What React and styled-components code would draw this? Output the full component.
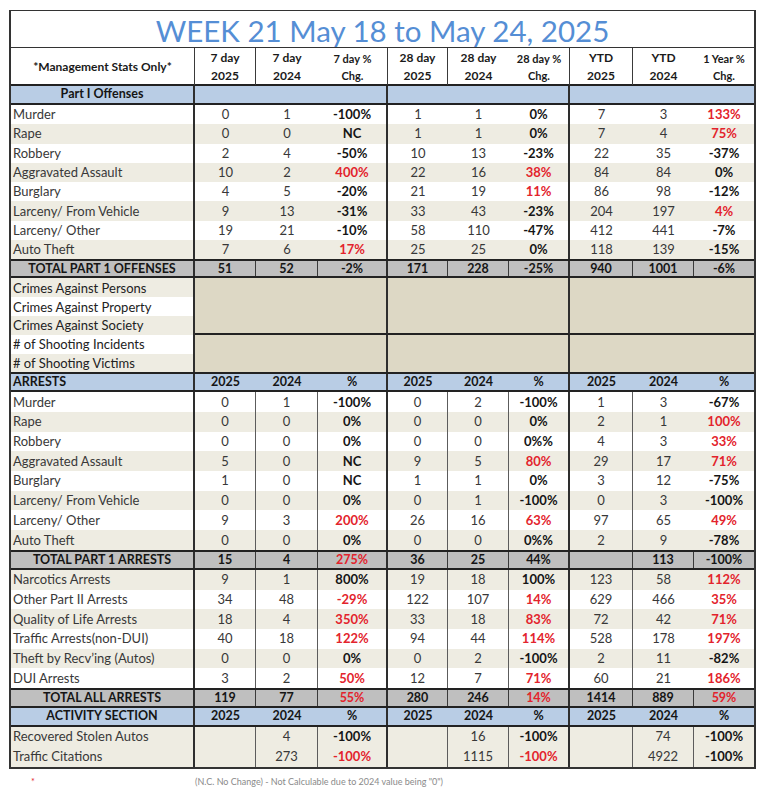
import React from "react";
import styled, { createGlobalStyle } from "styled-components";

const GlobalStyle = createGlobalStyle`
  body {
    margin: 0;
    background: #fff;
    font-family: Lato, "Open Sans", "Liberation Sans", sans-serif;
  }
`;

const COLS = "184px 61px 62px 70px 60px 61px 61px 63px 61px 60px";

const LINES = {
  g: "2px solid #2e2e2e",
  d: "1px solid #3a3a3a",
  t: "1px solid #5c5c5c",
  "": "none",
};

const BG = {
  white: "#ffffff",
  beige: "#eeece2",
  blue: "#b9cde5",
  gray: "#bfbfbf",
  tan: "#ddd8c5",
};

const Page = styled.div`
  padding: 10px 0 0 9px;
  height: 788px;
  box-sizing: border-box;
  overflow: hidden;
`;

const Sheet = styled.div`
  width: 747px;
  box-sizing: border-box;
  border: 1px solid #333;
  border-left-width: 2px;
  border-right-width: 2px;
  border-bottom-width: 2px;
`;

const TitleBar = styled.div`
  height: 37px;
  display: flex;
  align-items: center;
  justify-content: center;
  border-bottom: 1px solid #333;
  font-size: 29.5px;
  color: #558ed5;
  padding-top: 2px;
  box-sizing: border-box;
`;

const Row = styled.div`
  display: grid;
  grid-template-columns: ${COLS};
  height: ${(p) => p.$h}px;
  box-sizing: border-box;
  background: ${(p) => BG[p.$bg] || "transparent"};
  border-top: ${(p) => (p.$top ? "2px solid #222" : "none")};
  border-bottom: ${(p) => (p.$bottom ? "2px solid #222" : "none")};
  font-size: ${(p) => p.$size || 13}px;
`;

const Cell = styled.div`
  display: flex;
  align-items: center;
  justify-content: ${(p) => (p.$left ? "flex-start" : "center")};
  padding: ${(p) => (p.$left ? "0 0 0 2px" : "0 2px")};
  box-sizing: border-box;
  border-right: ${(p) => LINES[p.$line || ""]};
  font-weight: ${(p) => (p.$bold ? 700 : 400)};
  font-size: ${(p) => (p.$fs ? `${p.$fs}px` : "inherit")};
  color: ${(p) => (p.$red ? "#e3232c" : p.$bold ? "#151515" : "#383838")};
  white-space: nowrap;
  overflow: hidden;
  line-height: 1;
`;

const HeadCell = styled.div`
  display: flex;
  flex-direction: column;
  align-items: center;
  justify-content: center;
  border-right: ${(p) => LINES[p.$line || ""]};
  font-weight: 700;
  font-size: ${(p) => (p.$small ? "11px" : "12px")};
  line-height: ${(p) => (p.$small ? "17px" : "18px")};
  color: #1a1a1a;
  box-sizing: border-box;
  white-space: nowrap;
  padding-top: 1px;
`;

const CrimeBlock = styled.div`
  display: grid;
  grid-template-columns: 184px 193px 182px 184px;
  grid-template-rows: repeat(5, 18.8px);
  font-size: 13px;
`;

const CrimeLabel = styled.div`
  grid-column: 1;
  display: flex;
  align-items: center;
  padding-left: 2px;
  background: ${(p) => BG[p.$bg]};
  border-right: 2px solid #2e2e2e;
  color: #222;
  white-space: nowrap;
`;

const TanArea = styled.div`
  grid-column: ${(p) => p.$col};
  grid-row: ${(p) => p.$rows};
  background: ${BG.tan};
  box-sizing: border-box;
  border-right: ${(p) => (p.$col < 4 ? "2px solid #2e2e2e" : "none")};
  border-bottom: ${(p) => (p.$split ? "2px solid #222" : "none")};
`;

const Footnote = styled.div`
  display: flex;
  margin-top: 8px;
  font-size: 9px;
  line-height: 10px;
  color: #8a8a8a;
  white-space: nowrap;
`;

const Star = styled.span`
  color: #e3232c;
  width: 186px;
  padding-left: 22px;
  box-sizing: border-box;
`;

const PART1 = [
  ["Murder", "0", "1", "-100%", "1", "1", "0%", "7", "3", "133%r"],
  ["Rape", "0", "0", "NC", "1", "1", "0%", "7", "4", "75%r"],
  ["Robbery", "2", "4", "-50%", "10", "13", "-23%", "22", "35", "-37%"],
  ["Aggravated Assault", "10", "2", "400%r", "22", "16", "38%r", "84", "84", "0%"],
  ["Burglary", "4", "5", "-20%", "21", "19", "11%r", "86", "98", "-12%"],
  ["Larceny/ From Vehicle", "9", "13", "-31%", "33", "43", "-23%", "204", "197", "4%r"],
  ["Larceny/ Other", "19", "21", "-10%", "58", "110", "-47%", "412", "441", "-7%"],
  ["Auto Theft", "7", "6", "17%r", "25", "25", "0%", "118", "139", "-15%"],
];

const ARRESTS = [
  ["Murder", "0", "1", "-100%", "0", "2", "-100%", "1", "3", "-67%"],
  ["Rape", "0", "0", "0%", "0", "0", "0%", "2", "1", "100%r"],
  ["Robbery", "0", "0", "0%", "0", "0", "0%%", "4", "3", "33%r"],
  ["Aggravated Assault", "5", "0", "NC", "9", "5", "80%r", "29", "17", "71%r"],
  ["Burglary", "1", "0", "NC", "1", "1", "0%", "3", "12", "-75%"],
  ["Larceny/ From Vehicle", "0", "0", "0%", "0", "1", "-100%", "0", "3", "-100%"],
  ["Larceny/ Other", "9", "3", "200%r", "26", "16", "63%r", "97", "65", "49%r"],
  ["Auto Theft", "0", "0", "0%", "0", "0", "0%%", "2", "9", "-78%"],
];

const PART2 = [
  ["Narcotics Arrests", "9", "1", "800%", "19", "18", "100%", "123", "58", "112%r"],
  ["Other Part II Arrests", "34", "48", "-29%r", "122", "107", "14%r", "629", "466", "35%r"],
  ["Quality of Life Arrests", "18", "4", "350%r", "33", "18", "83%r", "72", "42", "71%r"],
  ["Traffic Arrests(non-DUI)", "40", "18", "122%r", "94", "44", "114%r", "528", "178", "197%r"],
  ["Theft by Recv\u2019ing (Autos)", "0", "0", "0%", "0", "2", "-100%", "2", "11", "-82%"],
  ["DUI Arrests", "3", "2", "50%r", "12", "7", "71%r", "60", "21", "186%r"],
];

const ACTIVITY = [
  ["Recovered Stolen Autos", "", "4", "-100%", "", "16", "-100%", "", "74", "-100%"],
  ["Traffic Citations", "", "273", "-100%r", "", "1115", "-100%r", "", "4922", "-100%"],
];

const CRIMES = [
  "Crimes Against Persons",
  "Crimes Against Property",
  "Crimes Against Society",
  "# of Shooting Incidents",
  "# of Shooting Victims",
];

const DATA_LINES = ["g", "", "", "g", "", "", "g", "", ""];
const ARREST_LINES = ["g", "t", "t", "g", "t", "t", "g", "t", ""];
const ACTIVITY_LINES = ["g", "t", "t", "g", "t", "t", "g", "t", "t"];
const TOTAL_LINES = ["g", "d", "d", "g", "d", "d", "g", "d", "d"];
const SECTION_LINES = ["g", "", "", "g", "", "", "g", "", ""];

function Value({ v, pct, line, bold }) {
  const red = v.endsWith("r");
  const text = red ? v.slice(0, -1) : v;
  return (
    <Cell $line={line} $bold={pct || bold} $red={red}>
      {text}
    </Cell>
  );
}

function DataRow({ row, lines, bg, h }) {
  const [label, ...vals] = row;
  return (
    <Row $h={h} $bg={bg}>
      <Cell $left $line={lines[0]}>
        {label}
      </Cell>
      {vals.map((v, i) => (
        <Value key={i} v={v} pct={i % 3 === 2} line={lines[i + 1]} />
      ))}
    </Row>
  );
}

function TotalRow({ row, h, top }) {
  const [label, ...vals] = row;
  return (
    <Row $h={h} $bg="gray" $top={top} $bottom $size={12.5}>
      <Cell $line="g" $bold $fs={12.5}>
        {label}
      </Cell>
      {vals.map((v, i) => (
        <Value key={i} v={v} bold line={TOTAL_LINES[i + 1]} />
      ))}
    </Row>
  );
}

function SectionRow({ label, center, years, h, top }) {
  const heads = years ? ["2025", "2024", "%", "2025", "2024", "%", "2025", "2024", "%"] : Array(9).fill("");
  return (
    <Row $h={h} $bg="blue" $top={top} $bottom $size={12.5}>
      <Cell $left={!center} $bold $line="g">
        {label}
      </Cell>
      {heads.map((t, i) => (
        <Cell key={i} $bold $line={SECTION_LINES[i + 1]}>
          {t}
        </Cell>
      ))}
    </Row>
  );
}

const HEADS = [
  ["7 day", "2025", "d"],
  ["7 day", "2024", ""],
  ["7 day %", "Chg.", "d", true],
  ["28 day", "2025", "d"],
  ["28 day", "2024", ""],
  ["28 day %", "Chg.", "d", true],
  ["YTD", "2025", "d"],
  ["YTD", "2024", ""],
  ["1 Year %", "Chg.", "", true],
];

export default function App() {
  return (
    <Page>
      <GlobalStyle />
      <Sheet>
        <TitleBar>WEEK 21 May 18 to May 24, 2025</TitleBar>
        <Row $h={38} $bottom>
          <HeadCell $line="d">*Management Stats Only*</HeadCell>
          {HEADS.map(([a, b, line, small], i) => (
            <HeadCell key={i} $line={line} $small={small}>
              <span>{a}</span>
              <span>{b}</span>
            </HeadCell>
          ))}
        </Row>
        <SectionRow label="Part I Offenses" center h={19} />
        {PART1.map((r, i) => (
          <DataRow key={r[0]} row={r} lines={DATA_LINES} bg={i % 2 ? "beige" : "white"} h={19.3} />
        ))}
        <TotalRow row={["TOTAL PART 1 OFFENSES", "51", "52", "-2%", "171", "228", "-25%", "940", "1001", "-6%"]} h={19} top />
        <CrimeBlock>
          {CRIMES.map((c, i) => (
            <CrimeLabel key={c} $bg={i % 2 ? "white" : "beige"}>
              {c}
            </CrimeLabel>
          ))}
          {[2, 3, 4].map((col) => (
            <TanArea key={"a" + col} $col={col} $rows="1 / 4" $split />
          ))}
          {[2, 3, 4].map((col) => (
            <TanArea key={"b" + col} $col={col} $rows="4 / 6" />
          ))}
        </CrimeBlock>
        <SectionRow label="ARRESTS" years h={20} top />
        {ARRESTS.map((r, i) => (
          <DataRow key={r[0]} row={r} lines={ARREST_LINES} bg={i % 2 ? "beige" : "white"} h={19.7} />
        ))}
        <TotalRow row={["TOTAL PART 1 ARRESTS", "15", "4", "275%r", "36", "25", "44%", "", "113", "-100%"]} h={20} top />
        {PART2.map((r, i) => (
          <DataRow key={r[0]} row={r} lines={ARREST_LINES} bg={i % 2 ? "white" : "beige"} h={19.7} />
        ))}
        <TotalRow row={["TOTAL ALL ARRESTS", "119", "77", "55%r", "280", "246", "14%r", "1414", "889", "59%r"]} h={20} top />
        <SectionRow label="ACTIVITY SECTION" center years h={19} />
        {ACTIVITY.map((r) => (
          <DataRow key={r[0]} row={r} lines={ACTIVITY_LINES} bg="beige" h={20} />
        ))}
      </Sheet>
      <Footnote>
        <Star>*</Star>
        <span>(N.C. No Change) - Not Calculable due to 2024 value being "0")</span>
      </Footnote>
    </Page>
  );
}
